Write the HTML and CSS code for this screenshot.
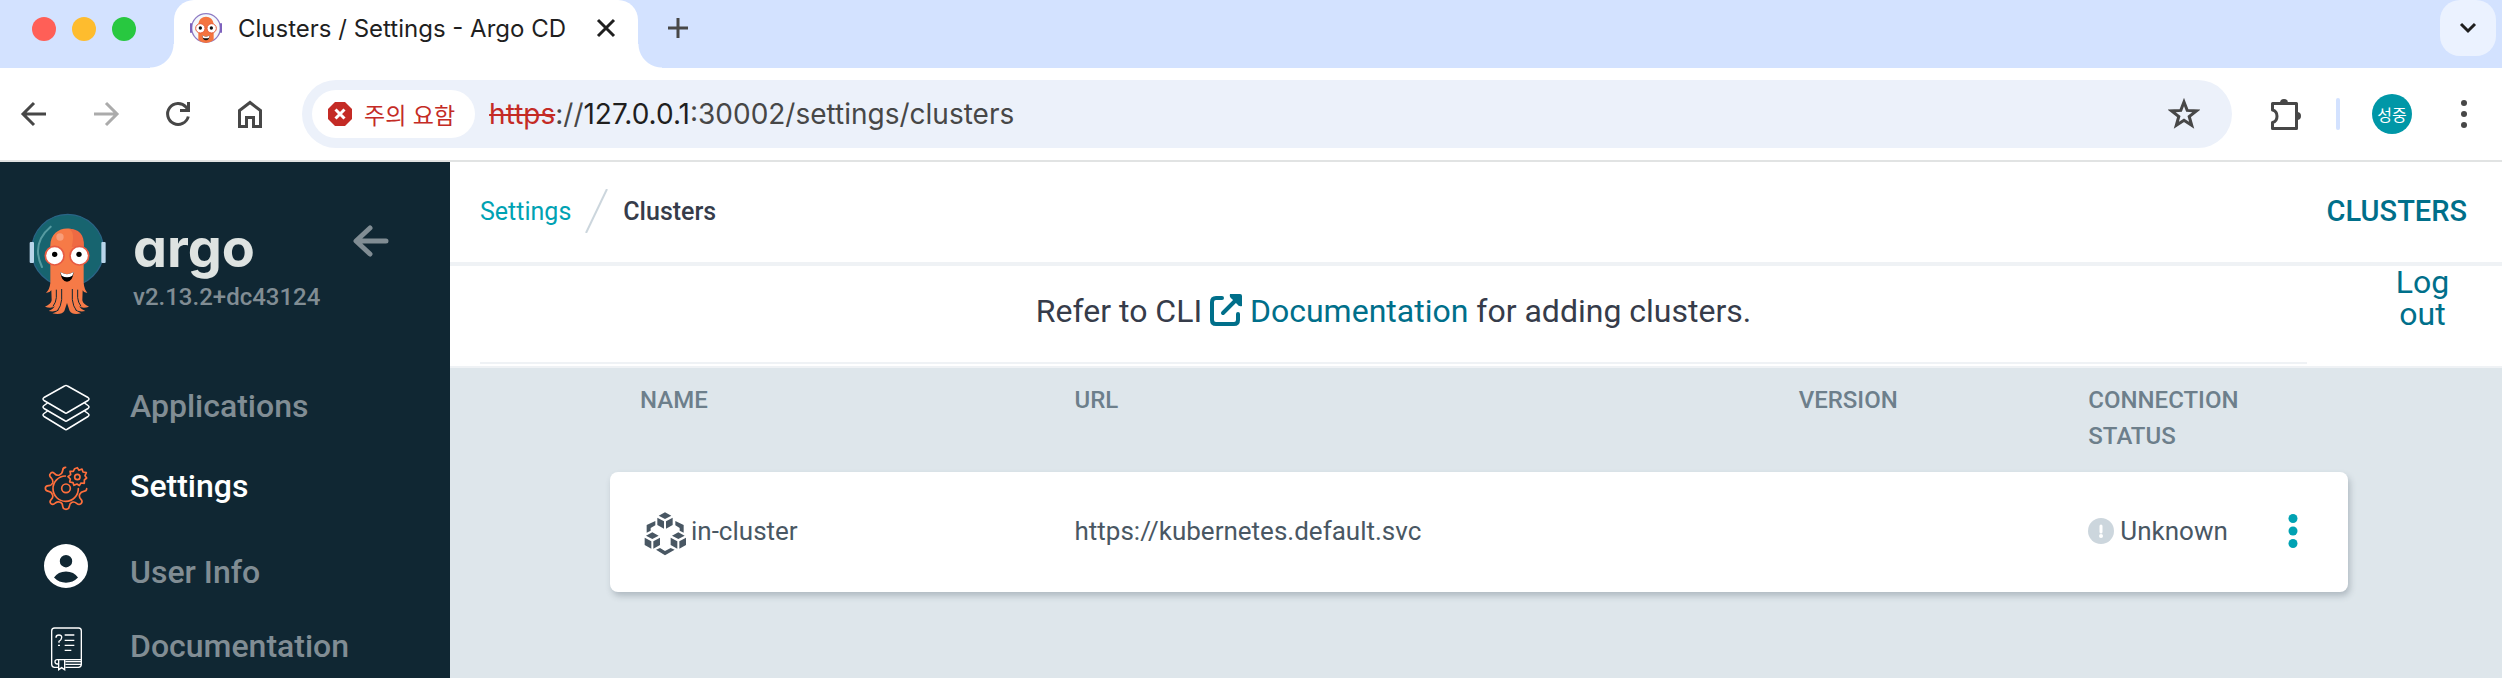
FILE: index.html
```html
<!DOCTYPE html>
<html lang="ko">
  <head>
    <meta charset="UTF-8" />
    <meta name="viewport" content="width=device-width, initial-scale=1.0" />
    <title>Clusters / Settings - Argo CD</title>
    <link rel="stylesheet" href="styles.css">
  </head>
  <body>
    <div class="tab-strip">
      <div class="lights">
        <span class="light red"></span>
        <span class="light yellow"></span>
        <span class="light green"></span>
      </div>
      <div class="tab">
        <svg class="favicon" width="32" height="32" viewBox="0 0 96 96" aria-hidden="true">
          <circle cx="48" cy="48" r="43" fill="#f4f8fc" stroke="#8f7cc4" stroke-width="4" />
          <path d="M25 40C25 6 71 6 71 40V84Q60 93 48 93T25 84Z" fill="#f4743f" />
          <path d="M3 34V62M93 34V62" stroke="#7e62bd" stroke-width="6" />
          <circle cx="31" cy="49" r="14" fill="#fff" stroke="#e75a36" stroke-width="3" />
          <circle cx="65" cy="49" r="14" fill="#fff" stroke="#e75a36" stroke-width="3" />
          <circle cx="31" cy="48" r="5" fill="#111" />
          <circle cx="64" cy="48" r="5" fill="#111" />
          <path d="M37 70Q48 78 59 70Q58 85 48 85T37 70Z" fill="#111" />
          <path d="M37 70Q48 78 59 70L57 77Q48 81 39 77Z" fill="#fff" />
        </svg>
        <span class="tab-title">Clusters / Settings - Argo CD</span>
        <button class="icon-button" aria-label="Close tab">
          <svg width="24" height="24" viewBox="0 0 24 24"><path d="M4 4L20 20M20 4L4 20" stroke="#1f1f1f" stroke-width="3" /></svg>
        </button>
      </div>
      <button class="icon-button new-tab" aria-label="New tab">
        <svg width="24" height="24" viewBox="0 0 24 24"><path d="M12 2V22M2 12H22" stroke="#474747" stroke-width="3" /></svg>
      </button>
      <button class="tab-search" aria-label="Search tabs">
        <svg width="24" height="24" viewBox="0 0 24 24"><path d="M5 8L12 15L19 8" fill="none" stroke="#1f1f1f" stroke-width="3" /></svg>
      </button>
    </div>

    <div class="toolbar">
      <div class="toolbar-nav">
        <button class="icon-button" aria-label="Back">
          <svg width="32" height="32" viewBox="0 0 32 32"><path d="M28 16H6M16 5L5 16L16 27" fill="none" stroke="#474747" stroke-width="3" /></svg>
        </button>
        <button class="icon-button" aria-label="Forward">
          <svg width="32" height="32" viewBox="0 0 32 32"><path d="M4 16H26M16 5L27 16L16 27" fill="none" stroke="#ababab" stroke-width="3" /></svg>
        </button>
        <button class="icon-button" aria-label="Reload">
          <svg width="32" height="32" viewBox="0 0 32 32"><path d="M26.300 18.500A10.500 10.500 0 1 1 24 9L26 12M26.500 4V12.500H18" fill="none" stroke="#474747" stroke-width="3" /></svg>
        </button>
        <button class="icon-button" aria-label="Home">
          <svg width="32" height="32" viewBox="0 0 32 32"><path d="M5.500 28.500V12.500L16 4.500L26.500 12.500V28.500H19.500V19.500H12.500V28.500Z" fill="none" stroke="#474747" stroke-width="3" /></svg>
        </button>
      </div>
      <div class="omnibox">
        <button class="security-chip">
          <svg width="24" height="24" viewBox="0 0 24 24" aria-hidden="true">
            <path d="M7 0H17L24 7V17L17 24H7L0 17V7Z" fill="#c42b25" />
            <path d="M7.500 7.500L16.500 16.500M16.500 7.500L7.500 16.500" stroke="#fff" stroke-width="3" />
          </svg>
          <span>주의 요함</span>
        </button>
        <div class="url" role="textbox" aria-label="Address"><span class="scheme">https</span>://<span class="host">127.0.0.1</span>:30002/settings/clusters</div>
        <button class="icon-button" aria-label="Bookmark">
          <svg width="32" height="32" viewBox="0 0 32 32"><path d="M16 4L19.200 12.400L28.300 12.900L21.200 18.500L23.700 27.300L16 22.300L8.300 27.300L10.800 18.500L3.700 12.900L12.800 12.400Z" fill="none" stroke="#474747" stroke-width="3" /></svg>
        </button>
      </div>
      <div class="toolbar-end">
        <button class="icon-button" aria-label="Extensions">
          <svg width="36" height="36" viewBox="0 0 36 36">
            <path d="M4.500 7.500H28.500V32.500H4.500V26.500C10.500 25 10.500 15.500 4.500 14Z" fill="none" stroke="#474747" stroke-width="3" stroke-linejoin="round" />
            <path d="M12 7A4 4 0 0 1 20 7ZM29 16A4 4 0 0 1 29 24Z" fill="#474747" />
          </svg>
        </button>
        <span class="toolbar-divider"></span>
        <button class="avatar">성중</button>
        <button class="icon-button" aria-label="Browser menu">
          <svg width="32" height="32" viewBox="0 0 32 32" fill="#474747"><circle cx="16" cy="5" r="3" /><circle cx="16" cy="16" r="3" /><circle cx="16" cy="27" r="3" /></svg>
        </button>
      </div>
    </div>

    <div class="app">
      <aside class="sidebar">
        <div class="brand">
          <svg class="mascot" width="78" height="102" viewBox="88 160 234 306" aria-hidden="true">
            <circle cx="204" cy="272" r="108" fill="#17646f" stroke="#2a6486" stroke-width="4" />
            <path d="M153 201C113 235 106 278 127 322" fill="none" stroke="#569ba1" stroke-width="6" stroke-linecap="round" />
            <rect x="90" y="247" width="13" height="63" rx="3" fill="#b9d5ea" />
            <rect x="305" y="247" width="13" height="63" rx="3" fill="#b9d5ea" />
            <path d="M152 262C148 188 256 188 252 262V370Q254 390 263 399Q252 400 249 392L248 422Q250 434 268 441Q250 448 238 440Q243 448 257 454Q236 458 225 448Q230 456 244 461Q218 467 210 454L202 430L194 454Q186 467 158 461Q174 456 179 448Q168 458 147 454Q161 448 166 440Q154 448 136 441Q154 434 156 422L155 392Q150 400 139 399Q150 390 152 370Z" fill="#f67a47" />
            <path d="M202 207C225 208 222 240 216 262H252C256 221 235 206 202 207Z" fill="#ee6a43" />
            <path d="M170 390V414Q169 428 160 440M186 388V420Q184 440 173 454M218 388V420Q220 440 231 454M234 390V414Q235 428 244 440" fill="none" stroke="#102733" stroke-width="3" />
            <circle cx="181" cy="232" r="11" fill="#f89d79" />
            <circle cx="165" cy="288" r="28" fill="#fff" stroke="#e75a42" stroke-width="5" />
            <circle cx="239" cy="288" r="28" fill="#fff" stroke="#e75a42" stroke-width="5" />
            <circle cx="165" cy="284" r="8" fill="#000" />
            <circle cx="238" cy="284" r="8" fill="#000" />
            <path d="M182 337Q202 350 222 337Q219 366 202 366T182 337Z" fill="#000" />
            <path d="M182 337Q202 350 222 337L218 348Q202 358 186 348Z" fill="#fff" />
          </svg>
          <div class="brand-text">
            <span class="wordmark">argo</span>
            <span class="version">v2.13.2+dc43124</span>
          </div>
          <button class="icon-button collapse" aria-label="Collapse sidebar">
            <svg width="36" height="32" viewBox="0 0 36 32"><path d="M33 16H4M17 3L3 16L17 29" fill="none" stroke="#818d94" stroke-width="5" stroke-linecap="round" stroke-linejoin="round" /></svg>
          </button>
        </div>
        <nav class="nav">
          <a class="nav-item" href="#">
            <svg width="48" height="48" viewBox="0 0 48 48" fill="none" stroke="#fff" stroke-width="1.500" stroke-linejoin="round">
              <path d="M22.500 2Q24 1 25.500 2L46 13.500Q48 15 46 16.500L25.500 28.500Q24 30 22.500 28.500L2 16.500Q0 15 2 13.500Z" />
              <path d="M5.500 19L2 21.500Q0 23 2 24.500L22.500 36.500Q24 38 25.500 36.500L46 24.500Q48 23 46 21.500L42.500 19" />
              <path d="M5.500 27L2 29.500Q0 31 2 32.500L22.500 45Q24 46.500 25.500 45L46 32.500Q48 31 46 29.500L42.500 27" />
            </svg>
            <span>Applications</span>
          </a>
          <a class="nav-item active" href="#">
            <svg width="48" height="48" viewBox="0 0 144 144" fill="none" stroke="#ff6f3c" stroke-width="5" stroke-linecap="round" stroke-linejoin="round">
              <path d="M71 10Q62 10 62 20Q61 29 52 33Q44 36 37 28Q30 22 25 29Q20 35 28 42Q34 48 32 57Q28 65 20 65Q10 66 10 73Q10 81 20 82Q28 83 31 91Q35 99 28 106Q21 113 27 119Q33 124 40 117Q47 112 55 115Q62 118 62 127Q63 136 72 136Q81 136 82 127Q83 118 90 115Q97 112 104 118Q111 124 117 119Q123 112 117 106Q110 99 113 91Q117 83 125 82Q134 81 134 74" />
              <path d="M70 36A38 38 0 1 0 109 74" />
              <circle cx="72" cy="73" r="13" />
              <circle cx="106" cy="39" r="8" />
              <path d="M106 11L111 19L120 15L123 24L133 26L129 35L134 42L127 48L127 58L117 57L112 65L105 60L96 64L93 56L83 54L85 45L78 38L86 32L84 22L94 22L98 14Z" />
            </svg>
            <span>Settings</span>
          </a>
          <a class="nav-item low" href="#">
            <svg width="48" height="44" viewBox="0 0 48 44">
              <path fill="#fff" fill-rule="evenodd" d="M24 0A22 22 0 1 1 24 44A22 22 0 1 1 24 0ZM24 11A6.200 6.200 0 1 0 24 23.400A6.200 6.200 0 1 0 24 11ZM12 33.500Q17 38.700 24 38.700T36 33.500Q32 27.500 24 27.500T12 33.500Z" />
            </svg>
            <span>User Info</span>
          </a>
          <a class="nav-item" href="#">
            <svg width="48" height="48" viewBox="0 0 144 144" fill="none" stroke="#fff" stroke-width="4">
              <path d="M48 130H38Q29 130 29 121V21Q29 12 38 12H110Q118 12 118 21V121Q118 130 109 130H70" />
              <path d="M118 107H46Q39 107 39 113T46 120H48M70 113H118M70 121H118" />
              <path d="M50 108V137L59 131L68 137V108" />
              <path d="M68 33H97M68 49H97M68 64H97M68 79H88M42 41Q42 33 51 33T59 41T51 52V56M48 64H54" />
            </svg>
            <span>Documentation</span>
          </a>
        </nav>
      </aside>

      <main class="content">
        <header class="top-bar">
          <div class="breadcrumbs">
            <a href="#">Settings</a>
            <svg width="24" height="44" viewBox="0 0 24 44" aria-hidden="true"><path d="M1 44L22 0" stroke="#ccd6dd" stroke-width="2" /></svg>
            <span class="current">Clusters</span>
          </div>
          <h1 class="page-title">Clusters</h1>
        </header>
        <div class="tool-row">
          <p class="hint">
            Refer to CLI
            <a href="#"><svg width="32" height="32" viewBox="0 0 32 32" aria-hidden="true"><path d="M12 4H6Q2 4 2 8V26Q2 30 6 30H24Q28 30 28 26V20M13 19L27 5" fill="none" stroke="#006f8a" stroke-width="4" stroke-linecap="round" /><path d="M20 0H30Q32 0 32 2V12Q29 13 27 10L22 5Q19 3 20 0Z" fill="#006f8a" /></svg>
            Documentation</a>
            for adding clusters.
          </p>
          <button class="logout">Log out</button>
        </div>
        <table class="clusters">
          <thead>
            <tr>
              <th>Name</th>
              <th>URL</th>
              <th>Version</th>
              <th>Connection Status</th>
            </tr>
          </thead>
          <tbody>
            <tr>
              <td>
                <svg class="cluster-icon" width="44" height="44" viewBox="68 93 132 132" fill="#495763" aria-hidden="true">
                  <path d="M134 94L153 104L134 114L115 104ZM111 110L131 121V143L111 132ZM157 110L137 121V143L157 132Z" />
                  <path d="M96 154L115 164L96 174L77 164ZM73 170L93 181V203L73 192ZM119 170L99 181V203L119 192Z" />
                  <path d="M174 154L193 164L174 174L155 164ZM151 170L171 181V203L151 192ZM197 170L177 181V203L197 192Z" />
                  <path d="M105 120V133L91 141V149L79 155V132ZM165 120V133L178 141V149L190 155V132ZM107 206L119 201L134 210L151 201L163 206L134 223Z" />
                </svg>
                <span>in-cluster</span>
              </td>
              <td>https://kubernetes.default.svc</td>
              <td></td>
              <td>
                <svg class="status-icon" width="26" height="26" viewBox="0 0 26 26" aria-hidden="true">
                  <circle cx="13" cy="13" r="13" fill="#ccd6dd" />
                  <path d="M13 8V14" stroke="#fff" stroke-width="3" stroke-linecap="round" />
                  <circle cx="13" cy="18" r="2" fill="#fff" />
                </svg>
                <span>Unknown</span>
                <button class="icon-button row-menu" aria-label="Cluster actions">
                  <svg width="10" height="36" viewBox="0 0 10 36" fill="#00a2b3"><circle cx="5" cy="5.500" r="4.500" /><circle cx="5" cy="18" r="4.500" /><circle cx="5" cy="30.500" r="4.500" /></svg>
                </button>
              </td>
            </tr>
          </tbody>
        </table>
      </main>
    </div>
  </body>
</html>
```

FILE: styles.css
```css
* {
  box-sizing: border-box;
}
body {
  margin: 0;
  height: 100vh;
  display: flex;
  flex-direction: column;
  overflow: hidden;
  font-family: Roboto, "Noto Sans CJK KR", sans-serif;
  background-color: #fff;
}
button {
  font: inherit;
  border: none;
  padding: 0;
  background: none;
  cursor: pointer;
}
a {
  text-decoration: none;
}
svg {
  display: block;
  flex-shrink: 0;
}
.icon-button {
  display: flex;
}

/* Tab strip */
.tab-strip {
  display: flex;
  height: 68px;
  background-color: #d3e2ff;
  font-family: Inter, "Noto Sans CJK KR", sans-serif;
}
.lights {
  display: flex;
  gap: 16px;
  padding: 17px 38px 0 32px;
}
.light {
  width: 24px;
  height: 24px;
  border-radius: 50%;
}
.red {
  background-color: #ff5f57;
}
.yellow {
  background-color: #febc2e;
}
.green {
  background-color: #28c840;
}
.tab {
  position: relative;
  display: flex;
  align-items: center;
  width: 464px;
  padding: 0 20px 12px 16px;
  border-radius: 20px 20px 0 0;
  background-color: #fff;
}
.tab::before,
.tab::after {
  content: "";
  position: absolute;
  bottom: 0;
  width: 24px;
  height: 24px;
}
.tab::before {
  right: 100%;
  background: radial-gradient(circle at 0 0, transparent 23px, #fff 24px);
}
.tab::after {
  left: 100%;
  background: radial-gradient(circle at 100% 0, transparent 23px, #fff 24px);
}
.tab-title {
  flex: 1;
  margin-left: 16px;
  font-size: 24px;
  color: #1f1f1f;
  white-space: nowrap;
}
.new-tab {
  padding: 16px 28px;
}
.tab-search {
  display: flex;
  align-items: center;
  justify-content: center;
  width: 56px;
  height: 56px;
  margin: 0 6px 0 auto;
  border-radius: 20px;
  background-color: #ebf2ff;
}

/* Toolbar */
.toolbar {
  display: flex;
  align-items: center;
  height: 94px;
  padding: 0 22px 0 18px;
  border-bottom: 2px solid #e1e3e3;
}
.toolbar-nav {
  display: flex;
  gap: 40px;
  margin-right: 36px;
}
.omnibox {
  display: flex;
  flex: 1;
  align-items: center;
  height: 68px;
  padding: 0 32px 0 10px;
  border-radius: 34px;
  background-color: #ecf1fa;
}
.security-chip {
  display: flex;
  align-items: center;
  gap: 12px;
  height: 48px;
  padding: 0 20px 0 16px;
  border-radius: 24px;
  background-color: #fff;
  color: #c42b25;
  font-family: "Noto Sans CJK KR", sans-serif;
  font-size: 23px;
  line-height: 30px;
}
.url {
  flex: 1;
  margin-left: 14px;
  font-family: Inter, sans-serif;
  font-size: 28px;
  line-height: 34px;
  color: #474747;
}
.scheme {
  color: #c42b25;
  text-decoration: line-through;
}
.host {
  color: #1f1f1f;
}
.toolbar-end {
  display: flex;
  align-items: center;
  margin-left: 36px;
}
.toolbar-divider {
  width: 4px;
  height: 32px;
  margin: 0 32px;
  border-radius: 2px;
  background-color: #d3e2ff;
}
.avatar {
  width: 40px;
  height: 40px;
  margin-right: 36px;
  border-radius: 50%;
  background-color: #0097a7;
  color: #fff;
  font-family: "Noto Sans CJK KR", sans-serif;
  font-size: 16px;
}

/* Sidebar */
.app {
  display: flex;
  flex: 1;
  min-height: 0;
}
.sidebar {
  width: 450px;
  flex-shrink: 0;
  background-color: #102733;
  color: #818d94;
  font-weight: 500;
}
.brand {
  display: flex;
  align-items: flex-start;
  height: 206px;
  padding: 51px 61px 0 29px;
}
.brand-text {
  display: flex;
  flex: 1;
  flex-direction: column;
  margin-left: 26px;
}
.wordmark {
  font-family: Inter, sans-serif;
  font-size: 54px;
  font-weight: 700;
  font-feature-settings: "cv11";
  line-height: 70px;
  color: #dee3e1;
}
.version {
  font-size: 24px;
  line-height: 28px;
}
.collapse {
  padding-top: 12px;
}
.nav-item {
  display: flex;
  align-items: center;
  gap: 40px;
  height: 80px;
  padding: 16px 42px;
  color: #818d94;
  font-size: 32px;
  line-height: 32px;
}
.nav-item span {
  padding-bottom: 4px;
}
.nav-item.active {
  color: #fff;
}
.nav-item.low {
  align-items: flex-end;
  padding-bottom: 20px;
}
.nav-item.low span {
  padding-bottom: 0;
}

/* Content */
.content {
  flex: 1;
  background-color: #dee6eb;
}
.top-bar {
  display: flex;
  align-items: center;
  justify-content: space-between;
  height: 104px;
  padding: 0 35px 2px 30px;
  border-bottom: 4px solid #eff2f5;
  background-color: #fff;
}
.breadcrumbs {
  display: flex;
  align-items: center;
  gap: 14px;
  font-size: 25px;
}
.breadcrumbs a {
  color: #00a2b3;
}
.current {
  color: #363c4a;
  font-weight: 500;
}
.page-title {
  margin: 0;
  color: #006f8a;
  font-size: 29px;
  font-weight: 500;
  text-transform: uppercase;
}
.tool-row {
  display: flex;
  align-items: flex-start;
  height: 102px;
  padding-left: 30px;
  border-bottom: 2px solid #eff2f5;
  background-color: #fff;
}
.hint {
  flex: 1;
  height: 98px;
  margin: 0;
  border-bottom: 2px solid #eff2f5;
  color: #363c4a;
  font-size: 32px;
  line-height: 90px;
  text-align: center;
}
.hint a,
.logout {
  color: #006f8a;
}
.hint svg {
  display: inline-block;
  vertical-align: -4px;
}
.logout {
  width: 195px;
  padding: 0 50px 0 86px;
  font-size: 32px;
  line-height: 32px;
}

/* Clusters table */
.clusters {
  display: block;
  padding: 14px 154px 0 160px;
  color: #495763;
  font-size: 26px;
}
.clusters thead,
.clusters tbody {
  display: block;
}
.clusters tr {
  display: grid;
  grid-template-columns: 3fr 5fr 2fr 2fr;
}
.clusters thead tr {
  height: 90px;
}
.clusters th {
  padding: 0 30px;
  color: #6d7f8b;
  font-size: 24px;
  font-weight: 500;
  line-height: 36px;
  text-align: left;
  text-transform: uppercase;
}
.clusters tbody tr {
  height: 120px;
  border-radius: 8px;
  background-color: #fff;
  box-shadow: 2px 4px 6px rgba(73, 87, 99, 0.3);
}
.clusters td {
  display: flex;
  align-items: center;
  padding: 0 0 2px 30px;
}
.cluster-icon {
  margin: 6px 4px 0 3px;
}
.status-icon {
  margin: 0 6px 0 0;
}
.row-menu {
  margin: 0 50px 0 auto;
}
```
